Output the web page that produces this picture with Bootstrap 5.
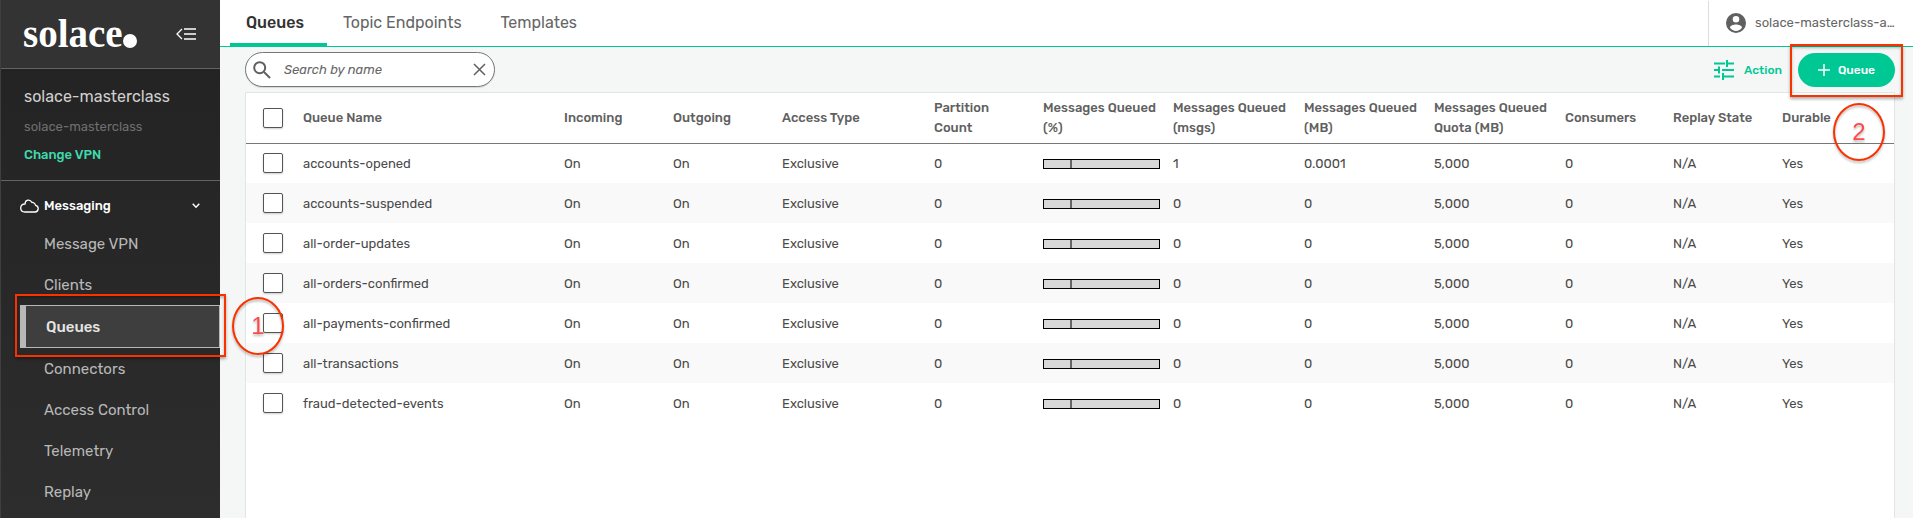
<!DOCTYPE html>
<html lang="en">
<head>
<meta charset="utf-8">
<meta name="viewport" content="width=device-width, initial-scale=1">
<title>Queues</title>
<link href="https://cdn.jsdelivr.net/npm/bootstrap@5.3.0/dist/css/bootstrap.min.css" rel="stylesheet">
<style>
  :root { --brand: #00c895; --note: #fa3200; }
  body { font-family: Rubik, Roboto, sans-serif; font-size: 13px; line-height: 20px; color: #4a4a4a; background: #f5f7f7; }
  a { text-decoration: none; }
  .plain { border: 0; background: none; padding: 0; }

  /* Sidebar */
  .side { width: 220px; background: linear-gradient(#222, #2d2d2d); border-left: 1px solid #3f3f3f; }
  .side-top { height: 69px; background: #333; border-bottom: 1px solid #636363; padding: 0 24px 0 22px; }
  .logo { font: bold 39px/38px "Liberation Serif", serif; color: #fff; }
  .logo-dot { width: 14px; height: 14px; border-radius: 50%; background: #fff; margin: 14px 0 0; }
  .side-vpn { height: 112px; padding: 16px 23px 0; border-bottom: 1px solid #636363; }
  .vpn-name { font-size: 16px; line-height: 24px; color: #d0d0d0; }
  .vpn-sub { color: #6f6f6f; margin-top: 8px; }
  .vpn-link { color: #3fd9ae; font-weight: 500; margin-top: 8px; }
  .side-group { height: 42px; padding: 8px 20px 0 19px; gap: 5px; color: #fff; font-weight: 500; }
  .side-item { height: 41px; padding-left: 43px; font-size: 15px; color: #b8b8b8; }
  .side-item.active { height: 43px; margin-left: 19px; padding-left: 20px; color: #e4e4e4; font-weight: 500; background: #3e3e3e; border: 1px solid #b8b8b8; border-left-width: 6px; }

  /* Top bar */
  .topbar { height: 47px; background: #fff; border-bottom: 1px solid var(--brand); }
  .tabs { padding-left: 10px; }
  .tab { padding: 14px 23px 0 16px; height: 46px; font-size: 16px; line-height: 18px; color: #666; border-bottom: 3px solid transparent; }
  .tab.active { color: #333; font-weight: 500; border-color: var(--brand); }
  .account { margin-top: 1px; width: 205px; padding: 0 17px 2px; border-left: 1px solid #ddd; color: #666; }
  .account svg { margin-right: 9px; }

  /* Tools above the table */
  .tools { padding: 5px 18px 5px 25px; }
  .search { width: 250px; height: 35px; border: 1px solid #777; border-radius: 18px; background: #fff; box-shadow: 0 1px 1px #0002; padding: 0 8px 0 7px; }
  .search input { border: 0; outline: 0; min-width: 0; background: none; margin-left: 13px; padding: 0; color: #666; }
  .search input::placeholder { color: #666; font-style: italic; }
  .action { color: var(--brand); font-size: 12px; font-weight: 500; }
  .action svg { margin-right: 10px; }
  .add { width: 97px; height: 34px; border: 0; border-radius: 17px; background: var(--brand); color: #fff; font-size: 12px; font-weight: 500; padding: 0; }

  /* Table */
  .panel { margin: 0 18px 0 25px; background: #fff; border: 1px solid #e2e5e5; border-bottom: 0; }
  .queues { table-layout: fixed; width: 100%; }
  .queues th { height: 50px; padding: 0 0 0 10px; font-weight: 500; color: #606060; border-bottom: 1px solid #777; }
  .queues td { height: 40px; padding: 2px 0 0 10px; }
  .queues th:first-child, .queues td:first-child { padding: 0 0 0 17px; }
  .queues tbody tr:nth-child(even) { background: #f9f9f9; }
  .pick { appearance: none; display: block; width: 20px; height: 20px; margin: 0; border: 1px solid #555; border-radius: 2px; background: #fff; box-shadow: 0 1px 2px #0003; }
  .pick:checked { background: var(--brand); }
  .usage { width: 117px; height: 10px; border: 1px solid #000; background: #d8d8d8; }
  .usage span { display: block; width: 28px; height: 8px; border-right: 2px solid #666; }

  /* Callouts over the page */
  .note-box, .note-round { border: 2px solid var(--note); pointer-events: none; z-index: 2; }
  .note-box { box-shadow: 0 2px 3px #0005, inset 0 2px 3px #0004; }
  .note-round { width: 52px; height: 58px; border-radius: 50%; filter: drop-shadow(0 2px 1px #0004); color: #ff4a4a; font: 24px/54px "Liberation Sans", sans-serif; text-align: center; }
  .box-nav { left: -11px; right: -7px; top: -12px; bottom: -10px; }
  .round-nav { left: 206px; top: -9px; }
  .box-add { left: -8px; right: -8px; top: -9px; bottom: -10px; }
  .round-add { right: 9px; top: 10px; }
</style>
</head>
<body>
<div class="d-flex min-vh-100">
  <aside class="side flex-shrink-0">
    <div class="side-top d-flex align-items-center justify-content-between">
      <div class="d-flex align-items-center"><span class="logo">solace</span><span class="logo-dot"></span></div>
      <button class="plain d-flex" aria-label="Collapse menu">
        <svg width="20" height="12" viewBox="0 0 20 12" fill="none" stroke="#fff"><path d="M6 1 1 6l5 5" stroke-width="1.3"/><path d="M8 1h12M8 6h12M8 11h12" stroke-width="1.6"/></svg>
      </button>
    </div>
    <div class="side-vpn">
      <div class="vpn-name">solace-masterclass</div>
      <div class="vpn-sub">solace-masterclass</div>
      <a href="#" class="vpn-link d-block">Change VPN</a>
    </div>
    <button class="plain side-group w-100 d-flex align-items-center">
      <svg width="19" height="14" viewBox="0 0 19 14" fill="none" stroke="#fff" stroke-width="1.3"><path d="M5 13h10a3.4 3.4 0 0 0 .6-6.700C15 4 13 3.200 12 3.500 10 0 5.200.400 5 5 2.500 4.800.700 6.600.700 9S2.500 13 5 13Z"/></svg>
      <span>Messaging</span>
      <svg class="ms-auto" width="8" height="6" viewBox="0 0 8 6" fill="none" stroke="#fff" stroke-width="1.400"><path d="m.7.7 3.300 3.600L7.300.700"/></svg>
    </button>
    <nav>
      <a href="#" class="side-item d-flex align-items-center">Message VPN</a>
      <a href="#" class="side-item d-flex align-items-center">Clients</a>
      <a href="#" class="side-item active d-flex align-items-center position-relative" aria-current="page">Queues
        <span class="note-box box-nav position-absolute"></span>
        <span class="note-round round-nav position-absolute">1</span>
      </a>
      <a href="#" class="side-item d-flex align-items-center">Connectors</a>
      <a href="#" class="side-item d-flex align-items-center">Access Control</a>
      <a href="#" class="side-item d-flex align-items-center">Telemetry</a>
      <a href="#" class="side-item d-flex align-items-center">Replay</a>
    </nav>
  </aside>

  <main class="flex-grow-1 d-flex flex-column" style="min-width: 0">
    <header class="topbar d-flex justify-content-between">
      <nav class="tabs d-flex">
        <a href="#" class="tab active">Queues</a>
        <a href="#" class="tab">Topic Endpoints</a>
        <a href="#" class="tab">Templates</a>
      </nav>
      <a href="#" class="account d-flex align-items-center text-nowrap">
        <svg class="flex-shrink-0" width="20" height="20" viewBox="0 0 20 20"><path fill="#606060" fill-rule="evenodd" d="M10 0a10 10 0 1 1 0 20 10 10 0 0 1 0-20Zm0 3a3.300 3.300 0 1 0 0 6.600A3.300 3.300 0 0 0 10 3Zm0 8.500c-2.500 0-6 1.200-6 3.200a7.200 7.200 0 0 0 12 0c0-2-3.500-3.200-6-3.200Z"/></svg>
        <span>solace-masterclass-a…</span>
      </a>
    </header>

    <div class="tools d-flex align-items-center">
      <label class="search d-flex align-items-center">
        <svg class="flex-shrink-0" width="18" height="18" viewBox="0 0 18 18" fill="none" stroke="#606060" stroke-width="2"><circle cx="6.700" cy="6.700" r="5.500"/><path d="m11 11 6 6"/></svg>
        <input class="flex-grow-1" type="text" placeholder="Search by name" aria-label="Search by name">
        <button class="plain d-flex" aria-label="Clear"><svg width="13" height="13" viewBox="0 0 13 13" stroke="#606060" stroke-width="1.500"><path d="m1 1 11 11M12 1 1 12"/></svg></button>
      </label>
      <button class="plain action d-flex align-items-center ms-auto me-3">
        <svg width="20" height="20" viewBox="0 0 20 20" fill="none" stroke="#00c895" stroke-width="2"><path d="M0 3.500h11M13 0v7M13 3.500h7M0 10h5M5 6.500v7M8 10h12M0 16.500h6M9 13v7M9 16.500h11"/></svg>
        <span>Action</span>
      </button>
      <div class="position-relative">
        <button class="add d-flex align-items-center justify-content-center">
          <svg class="me-2" width="12" height="12" viewBox="0 0 12 12" stroke="#fff" stroke-width="1.500"><path d="M6 0v12M0 6h12"/></svg>Queue
        </button>
        <span class="note-box box-add position-absolute"></span>
      </div>
    </div>

    <section class="panel flex-grow-1 position-relative">
      <table class="queues">
        <colgroup>
          <col style="width:47px"><col style="width:261px"><col style="width:109px"><col style="width:109px"><col style="width:152px"><col style="width:109px"><col style="width:130px"><col style="width:131px"><col style="width:130px"><col style="width:131px"><col style="width:108px"><col style="width:109px"><col style="width:122px">
        </colgroup>
        <thead>
          <tr><th><input class="pick" type="checkbox" aria-label="Select all"></th><th>Queue Name</th><th>Incoming</th><th>Outgoing</th><th>Access Type</th><th>Partition<br>Count</th><th>Messages Queued<br>(%)</th><th>Messages Queued<br>(msgs)</th><th>Messages Queued<br>(MB)</th><th>Messages Queued<br>Quota (MB)</th><th>Consumers</th><th>Replay State</th><th>Durable</th></tr>
        </thead>
        <tbody>
          <tr><td><input class="pick" type="checkbox" aria-label="accounts-opened"></td><td>accounts-opened</td><td>On</td><td>On</td><td>Exclusive</td><td>0</td><td><div class="usage"><span></span></div></td><td>1</td><td>0.0001</td><td>5,000</td><td>0</td><td>N/A</td><td>Yes</td></tr>
          <tr><td><input class="pick" type="checkbox" aria-label="accounts-suspended"></td><td>accounts-suspended</td><td>On</td><td>On</td><td>Exclusive</td><td>0</td><td><div class="usage"><span></span></div></td><td>0</td><td>0</td><td>5,000</td><td>0</td><td>N/A</td><td>Yes</td></tr>
          <tr><td><input class="pick" type="checkbox" aria-label="all-order-updates"></td><td>all-order-updates</td><td>On</td><td>On</td><td>Exclusive</td><td>0</td><td><div class="usage"><span></span></div></td><td>0</td><td>0</td><td>5,000</td><td>0</td><td>N/A</td><td>Yes</td></tr>
          <tr><td><input class="pick" type="checkbox" aria-label="all-orders-confirmed"></td><td>all-orders-confirmed</td><td>On</td><td>On</td><td>Exclusive</td><td>0</td><td><div class="usage"><span></span></div></td><td>0</td><td>0</td><td>5,000</td><td>0</td><td>N/A</td><td>Yes</td></tr>
          <tr><td><input class="pick" type="checkbox" aria-label="all-payments-confirmed"></td><td>all-payments-confirmed</td><td>On</td><td>On</td><td>Exclusive</td><td>0</td><td><div class="usage"><span></span></div></td><td>0</td><td>0</td><td>5,000</td><td>0</td><td>N/A</td><td>Yes</td></tr>
          <tr><td><input class="pick" type="checkbox" aria-label="all-transactions"></td><td>all-transactions</td><td>On</td><td>On</td><td>Exclusive</td><td>0</td><td><div class="usage"><span></span></div></td><td>0</td><td>0</td><td>5,000</td><td>0</td><td>N/A</td><td>Yes</td></tr>
          <tr><td><input class="pick" type="checkbox" aria-label="fraud-detected-events"></td><td>fraud-detected-events</td><td>On</td><td>On</td><td>Exclusive</td><td>0</td><td><div class="usage"><span></span></div></td><td>0</td><td>0</td><td>5,000</td><td>0</td><td>N/A</td><td>Yes</td></tr>
        </tbody>
      </table>
      <span class="note-round round-add position-absolute">2</span>
    </section>
  </main>
</div>
<script src="https://cdn.jsdelivr.net/npm/bootstrap@5.3.0/dist/js/bootstrap.bundle.min.js"></script>
</body>
</html>
